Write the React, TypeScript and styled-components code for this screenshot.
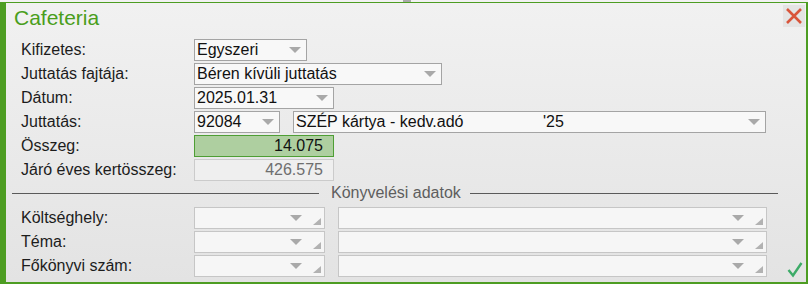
import React from 'react'
import styled, { createGlobalStyle, css } from 'styled-components'

type FieldVariant = 'normal' | 'amount' | 'readonly' | 'disabled'

interface FieldProps {
  w: number
  value?: string
  suffix?: string
  variant?: FieldVariant
  arrow?: boolean
  grip?: boolean
}

const green = '#4d9d22'

const GlobalStyle = createGlobalStyle`
  html, body {
    margin: 0;
    padding: 0;
    background: #f0f0f0;
    font-family: 'Liberation Sans', Arial, sans-serif;
  }
`

const Strip = styled.div`
  height: 2px;
  display: flex;
  padding-left: 403px;
  background: #f2f2f2;
`

const Thumb = styled.div`
  width: 8px;
  background: #a9a9a9;
`

const Window = styled.div`
  width: 808px;
  height: 282px;
  box-sizing: border-box;
  border-top: 1px solid ${green};
  border-left: 6px solid ${green};
  border-right: 2px solid ${green};
  border-bottom: 2px solid ${green};
  background: linear-gradient(#f1f1f1, #e3e3e3);
  display: flex;
  flex-direction: column;
`

const TitleBar = styled.div`
  height: 36px;
  box-sizing: border-box;
  padding: 2px 1px 0 8px;
  display: flex;
  justify-content: space-between;
  align-items: flex-start;
`

const Title = styled.div`
  margin-top: 1px;
  font-size: 21px;
  line-height: 24px;
  color: #4a9e1c;
`

const IconButton = styled.div`
  width: 22px;
  height: 22px;
  display: flex;
  align-items: center;
  justify-content: center;
  background: #e4e4e4;
`

const Form = styled.div`
  display: grid;
  grid-template-columns: 173px 1fr;
  row-gap: 2px;
  padding-left: 15px;
`

const Label = styled.div`
  height: 22px;
  display: flex;
  align-items: center;
  font-size: 16px;
  color: #1c1c1c;
`

const Controls = styled.div`
  display: flex;
  gap: 13px;
  align-items: flex-start;
`

const variantMap = {
  normal: css`
    background: #f8f8f8;
    border-color: #a4a4a4;
    color: #111;
  `,
  amount: css`
    background: #aecfa0;
    border-color: #4e9e34;
    color: #111;
    padding-right: 10px;
  `,
  readonly: css`
    background: #efefef;
    border-color: #cbcbcb;
    color: #6e6e6e;
    padding-right: 10px;
  `,
  disabled: css`
    background: #f6f6f6;
    border-color: #c6c6c6;
    color: #111;
  `,
}

const FieldBox = styled.div<{ $w: number; $variant: FieldVariant }>`
  width: ${p => p.$w}px;
  height: 22px;
  box-sizing: border-box;
  border: 1px solid;
  padding-left: 2px;
  display: flex;
  align-items: center;
  font-size: 16px;
  white-space: nowrap;
  ${p => variantMap[p.$variant]};
`

const FieldText = styled.span<{ $right?: boolean }>`
  flex: 1;
  display: flex;
  justify-content: ${p => (p.$right ? 'flex-end' : 'flex-start')};
`

const NamePart = styled.span`
  width: 247px;
`

const Arrow = styled.span`
  width: 0;
  height: 0;
  margin: -1px 5px 0 0;
  border-left: 6px solid transparent;
  border-right: 6px solid transparent;
  border-top: 6px solid #a9a9a9;
`

const Grip = styled.span`
  width: 0;
  height: 0;
  align-self: flex-end;
  margin: 0 3px 3px 6px;
  border-left: 8px solid transparent;
  border-bottom: 7px solid #b2b2b2;
`

const Separator = styled.div`
  display: flex;
  align-items: center;
  margin: 3px 0 5px;
  padding-left: 6px;
  font-size: 16px;
  color: #5e5e5e;
`

const SepLine = styled.div<{ $w?: number }>`
  height: 1px;
  background: #5a5a5a;
  width: ${p => p.$w ?? 308}px;
`

const SepText = styled.span`
  margin: 0 9px 0 12px;
`

const CheckButton = styled(IconButton)`
  margin: 3px 0 -3px 4px;
`

const Field = ({ w, value, suffix, variant = 'normal', arrow, grip }: FieldProps) => (
  <FieldBox $w={w} $variant={variant}>
    <FieldText $right={variant === 'amount' || variant === 'readonly'}>
      {suffix ? <NamePart>{value}</NamePart> : value}
      {suffix}
    </FieldText>
    {arrow && <Arrow />}
    {grip && <Grip />}
  </FieldBox>
)

const CloseIcon = () => (
  <svg width="18" height="18" viewBox="0 0 18 18">
    <path d="M2 2 L16 16 M16 2 L2 16" stroke="#d9553b" strokeWidth="2.6" fill="none" />
  </svg>
)

const CheckIcon = () => (
  <svg width="18" height="18" viewBox="0 0 18 18">
    <path d="M2.5 10 L7 15.5 L15.5 3" stroke="#3dab68" strokeWidth="2.4" fill="none" />
  </svg>
)

const lookupRows = ['Költséghely:', 'Téma:', 'Főkönyvi szám:']

export default function App() {
  return (
    <>
      <GlobalStyle />
      <Strip>
        <Thumb />
      </Strip>
      <Window>
        <TitleBar>
          <Title>Cafeteria</Title>
          <IconButton>
            <CloseIcon />
          </IconButton>
        </TitleBar>
        <Form>
          <Label>Kifizetes:</Label>
          <Controls>
            <Field w={113} value="Egyszeri" arrow />
          </Controls>
          <Label>Juttatás fajtája:</Label>
          <Controls>
            <Field w={248} value="Béren kívüli juttatás" arrow />
          </Controls>
          <Label>Dátum:</Label>
          <Controls>
            <Field w={140} value="2025.01.31" arrow />
          </Controls>
          <Label>Juttatás:</Label>
          <Controls>
            <Field w={86} value="92084" arrow />
            <Field w={473} value="SZÉP kártya - kedv.adó" suffix="'25" arrow />
          </Controls>
          <Label>Összeg:</Label>
          <Controls>
            <Field w={140} value="14.075" variant="amount" />
          </Controls>
          <Label>Járó éves kertösszeg:</Label>
          <Controls>
            <Field w={140} value="426.575" variant="readonly" />
          </Controls>
        </Form>
        <Separator>
          <SepLine $w={307} />
          <SepText>Könyvelési adatok</SepText>
          <SepLine />
        </Separator>
        <Form>
          {lookupRows.map((label, i) => (
            <React.Fragment key={label}>
              <Label>{label}</Label>
              <Controls>
                <Field w={131} variant="disabled" arrow grip />
                <Field w={429} variant="disabled" arrow grip />
                {i === lookupRows.length - 1 && (
                  <CheckButton>
                    <CheckIcon />
                  </CheckButton>
                )}
              </Controls>
            </React.Fragment>
          ))}
        </Form>
      </Window>
    </>
  )
}
